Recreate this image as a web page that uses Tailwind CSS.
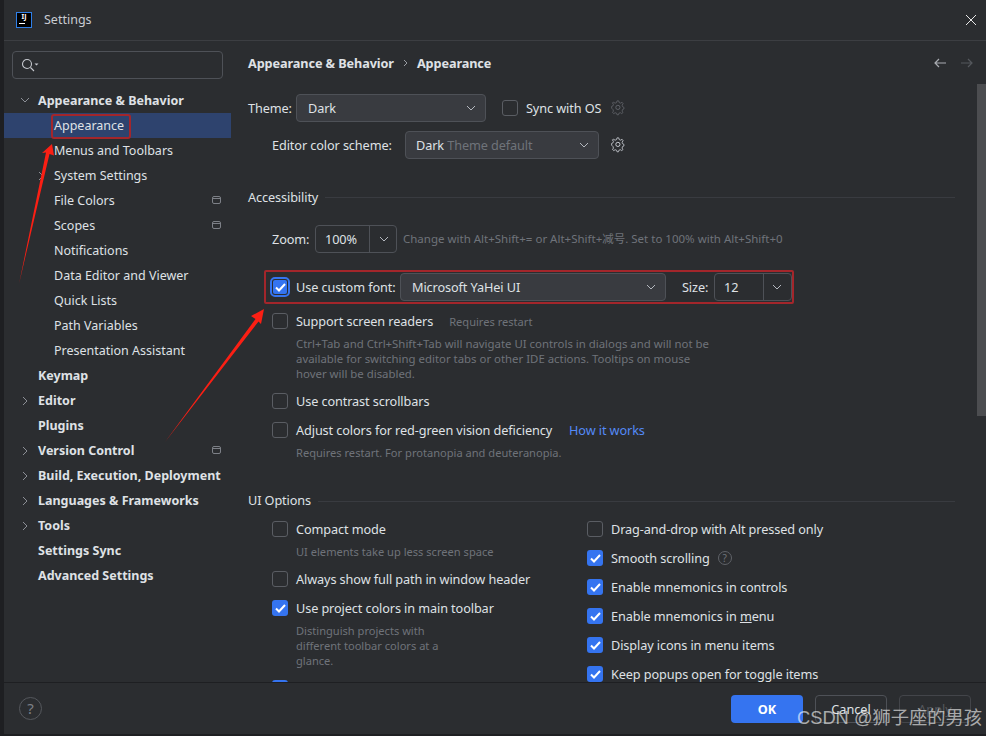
<!DOCTYPE html>
<html>
<head>
<meta charset="utf-8">
<script src="https://cdn.jsdelivr.net/npm/@tailwindcss/browser@4"></script>
</head>
<body class="m-0 bg-[#1e1f22]">
<div class="relative w-[986px] h-[736px] overflow-hidden flex bg-[#1e1f22] text-[12.5px] leading-5 text-[#dfe1e5] font-['Noto_Sans','Noto_Sans_CJK_SC',sans-serif]">
  <div class="w-[4px] shrink-0 bg-[#1e1f22]"></div>
  <div class="w-[982px] h-[734px] flex flex-col bg-[#2b2d30]">
    <div class="h-[41px] shrink-0 flex items-center border-b border-[#3c3e42] pb-[1px]">
      <div class="ml-[12px] w-[16px] h-[16px] border border-[#2f7fe8] bg-black relative flex flex-col items-center">
        <span class="text-[7px] leading-[8px] font-bold text-white">IJ</span>
        <span class="w-[6px] h-[1px] bg-white mt-[2px] self-start ml-[2px]"></span>
      </div>
      <span class="ml-[12px] text-[#c9ccd2]">Settings</span>
      <svg class="ml-auto mr-[9px]" width="12" height="12" viewBox="0 0 12 12"><path d="M1 1L11 11M11 1L1 11" stroke="#e8e8e8" stroke-width="1"/></svg>
    </div>
    <div class="h-[642px] shrink-0 flex overflow-hidden border-b border-[#1e1f22]">
      <div class="w-[227px] shrink-0">
        <div class="mt-[10px] ml-[8px] w-[211px] h-[28px] border border-[#4e5157] rounded-[4px] flex items-center pl-[8px]">
          <svg width="18" height="14" viewBox="0 0 18 14" fill="none"><circle cx="6" cy="6" r="4.5" stroke="#c5c8ce" stroke-width="1.1"/><path d="M9.5 9.5L13 13" stroke="#c5c8ce" stroke-width="1.1"/><path d="M13.5 5.5h4l-2 2z" fill="#c5c8ce"/></svg>
        </div>
        <div class="mt-[9px] text-[#dfe1e5]">
          <div class="h-[25px] flex items-center pl-[34px] relative font-bold"><svg class="absolute left-[16px] top-[9px]" width="10" height="7" viewBox="0 0 10 7" fill="none"><path d="M1 1l4 4 4-4" stroke="#8c8f96"/></svg>Appearance &amp; Behavior</div>
          <div class="h-[25px] flex items-center pl-[50px] bg-[#2e436e]">Appearance</div>
          <div class="h-[25px] flex items-center pl-[50px]">Menus and Toolbars</div>
          <div class="h-[25px] flex items-center pl-[50px] relative"><svg class="absolute left-[34px] top-[8px]" width="7" height="10" viewBox="0 0 7 10" fill="none"><path d="M1 1l4 4-4 4" stroke="#8c8f96"/></svg>System Settings</div>
          <div class="h-[25px] flex items-center justify-between pl-[50px] pr-[9px]">File Colors<svg width="10" height="9" viewBox="0 0 10 9" fill="none"><rect x="0.5" y="0.5" width="8" height="7" rx="1.5" stroke="#7d8087"/><path d="M1 2.5h7" stroke="#7d8087"/></svg></div>
          <div class="h-[25px] flex items-center justify-between pl-[50px] pr-[9px]">Scopes<svg width="10" height="9" viewBox="0 0 10 9" fill="none"><rect x="0.5" y="0.5" width="8" height="7" rx="1.5" stroke="#7d8087"/><path d="M1 2.5h7" stroke="#7d8087"/></svg></div>
          <div class="h-[25px] flex items-center pl-[50px]">Notifications</div>
          <div class="h-[25px] flex items-center pl-[50px]">Data Editor and Viewer</div>
          <div class="h-[25px] flex items-center pl-[50px]">Quick Lists</div>
          <div class="h-[25px] flex items-center pl-[50px]">Path Variables</div>
          <div class="h-[25px] flex items-center pl-[50px]">Presentation Assistant</div>
          <div class="h-[25px] flex items-center pl-[34px] font-bold">Keymap</div>
          <div class="h-[25px] flex items-center pl-[34px] relative font-bold"><svg class="absolute left-[18px] top-[8px]" width="7" height="10" viewBox="0 0 7 10" fill="none"><path d="M1 1l4 4-4 4" stroke="#8c8f96"/></svg>Editor</div>
          <div class="h-[25px] flex items-center pl-[34px] font-bold">Plugins</div>
          <div class="h-[25px] flex items-center justify-between pl-[34px] pr-[9px] relative font-bold"><svg class="absolute left-[18px] top-[8px]" width="7" height="10" viewBox="0 0 7 10" fill="none"><path d="M1 1l4 4-4 4" stroke="#8c8f96"/></svg>Version Control<svg width="10" height="9" viewBox="0 0 10 9" fill="none"><rect x="0.5" y="0.5" width="8" height="7" rx="1.5" stroke="#7d8087"/><path d="M1 2.5h7" stroke="#7d8087"/></svg></div>
          <div class="h-[25px] flex items-center pl-[34px] relative font-bold"><svg class="absolute left-[18px] top-[8px]" width="7" height="10" viewBox="0 0 7 10" fill="none"><path d="M1 1l4 4-4 4" stroke="#8c8f96"/></svg>Build, Execution, Deployment</div>
          <div class="h-[25px] flex items-center pl-[34px] relative font-bold"><svg class="absolute left-[18px] top-[8px]" width="7" height="10" viewBox="0 0 7 10" fill="none"><path d="M1 1l4 4-4 4" stroke="#8c8f96"/></svg>Languages &amp; Frameworks</div>
          <div class="h-[25px] flex items-center pl-[34px] relative font-bold"><svg class="absolute left-[18px] top-[8px]" width="7" height="10" viewBox="0 0 7 10" fill="none"><path d="M1 1l4 4-4 4" stroke="#8c8f96"/></svg>Tools</div>
          <div class="h-[25px] flex items-center pl-[34px] font-bold">Settings Sync</div>
          <div class="h-[25px] flex items-center pl-[34px] font-bold">Advanced Settings</div>
        </div>
      </div>
      <div class="flex-1 relative overflow-hidden pl-[17px] text-[12.7px] tracking-[-0.1px]">
        <div class="mt-[12px] h-[20px] flex items-center font-bold w-[707px]">
          <span>Appearance &amp; Behavior</span>
          <svg class="ml-[9px] mr-[9px]" width="5" height="8" viewBox="0 0 5 8" fill="none"><path d="M1 1l3 3-3 3" stroke="#9a9da3"/></svg>
          <span>Appearance</span>
          <svg class="ml-auto" width="14" height="10" viewBox="0 0 14 10" fill="none"><path d="M13 5H2M6 1L2 5l4 4" stroke="#a9acb2" stroke-width="1.2"/></svg>
          <svg class="ml-[13px] mr-[-19px] shrink-0" width="14" height="10" viewBox="0 0 14 10" fill="none"><path d="M1 5h11M8 1l4 4-4 4" stroke="#55585d" stroke-width="1.2"/></svg>
        </div>
        <div class="mt-[21px] h-[28px] flex items-center">
          <span class="w-[48px]">Theme:</span>
          <div class="w-[190px] h-[28px] rounded-[4px] border border-[#4e5157] bg-[#393b40] flex items-center justify-between pl-[11px] pr-[9px]">Dark<svg width="10" height="6" viewBox="0 0 10 6" fill="none"><path d="M1 1l4 4 4-4" stroke="#b4b8bf"/></svg></div>
          <span class="ml-[16px] w-[16px] h-[16px] rounded-[3px] border border-[#5a5d63]"></span>
          <span class="ml-[8px] w-[74px] whitespace-nowrap">Sync with OS</span>
          <svg class="ml-[11px]" width="16" height="16" viewBox="0 0 16 16" fill="none"><path d="M7 1h2l.5 2 1.6.7 1.8-1 1.2 1.6-1.2 1.7.4 1.7 1.7.8v2l-1.7.7-.4 1.7 1 1.7-1.4 1.2-1.6-1-1.7.6-.5 1.8H7l-.5-1.8-1.7-.6-1.6 1-1.4-1.2 1-1.7-.4-1.7L.7 9.500v-2l1.7-.8.4-1.7-1.2-1.7L3 2.7l1.8 1 1.7-.7z" transform="scale(.86)" stroke="#5f6268"/><circle cx="6.900" cy="7.400" r="2.100" stroke="#5f6268"/></svg>
        </div>
        <div class="mt-[9px] h-[28px] pl-[24px] flex items-center">
          <span class="w-[133px]">Editor color scheme:</span>
          <div class="w-[194px] h-[28px] rounded-[4px] border border-[#4e5157] bg-[#393b40] flex items-center justify-between pl-[10px] pr-[9px]"><span>Dark <span class="text-[#6f737a]">Theme default</span></span><svg width="10" height="6" viewBox="0 0 10 6" fill="none"><path d="M1 1l4 4 4-4" stroke="#b4b8bf"/></svg></div>
          <svg class="ml-[12px]" width="16" height="16" viewBox="0 0 16 16" fill="none"><path d="M7 1h2l.5 2 1.6.7 1.8-1 1.2 1.6-1.2 1.7.4 1.7 1.7.8v2l-1.7.7-.4 1.7 1 1.7-1.4 1.2-1.6-1-1.7.6-.5 1.8H7l-.5-1.8-1.7-.6-1.6 1-1.4-1.2 1-1.7-.4-1.7L.7 9.500v-2l1.7-.8.4-1.7-1.2-1.7L3 2.7l1.8 1 1.7-.7z" transform="scale(.86)" stroke="#c5c8ce"/><circle cx="6.900" cy="7.400" r="2.100" stroke="#c5c8ce"/></svg>
        </div>
        <div class="mt-[28px] h-[20px] pb-[1px] flex items-center w-[707px]"><span>Accessibility</span><span class="ml-[7px] flex-1 h-px mt-[2px] bg-[#393b40]"></span></div>
        <div class="mt-[18px] h-[28px] pl-[24px] flex items-center">
          <span class="w-[43px]">Zoom:</span>
          <div class="w-[82px] h-[28px] rounded-[4px] border border-[#4e5157] flex items-center">
            <span class="w-[54px] pl-[9px] border-r border-[#4e5157] h-full flex items-center">100%</span>
            <svg class="ml-[9px]" width="10" height="6" viewBox="0 0 10 6" fill="none"><path d="M1 1l4 4 4-4" stroke="#b4b8bf"/></svg>
          </div>
          <span class="ml-[6px] text-[11.5px] tracking-normal text-[#6f737a]">Change with Alt+Shift+= or Alt+Shift+减号. Set to 100% with Alt+Shift+0</span>
        </div>
        <div class="mt-[20px] h-[28px] pl-[22px] flex items-center">
          <span class="w-[20px] h-[20px] rounded-[5px] border-2 border-[#3574f0] p-[1px] flex"><span class="w-full h-full rounded-[2px] bg-[#3574f0] flex items-center justify-center"><svg width="11" height="9" viewBox="0 0 11 9" fill="none"><path d="M1 4.500l3 3 6-6.500" stroke="#fff" stroke-width="2"/></svg></span></span>
          <span class="ml-[6px] w-[104px]">Use custom font:</span>
          <div class="w-[266px] h-[28px] rounded-[4px] border border-[#4e5157] bg-[#393b40] flex items-center justify-between pl-[11px] pr-[9px]">Microsoft YaHei UI<svg width="10" height="6" viewBox="0 0 10 6" fill="none"><path d="M1 1l4 4 4-4" stroke="#b4b8bf"/></svg></div>
          <span class="ml-[16px] w-[32px]">Size:</span>
          <div class="w-[78px] h-[28px] rounded-[4px] border border-[#4e5157] flex items-center">
            <span class="w-[49px] pl-[9px] border-r border-[#4e5157] h-full flex items-center">12</span>
            <svg class="ml-[8px]" width="10" height="6" viewBox="0 0 10 6" fill="none"><path d="M1 1l4 4 4-4" stroke="#b4b8bf"/></svg>
          </div>
        </div>
        <div class="mt-[10px] h-[20px] pl-[24px] flex items-center">
          <span class="w-[16px] h-[16px] rounded-[3px] border border-[#5a5d63]"></span>
          <span class="ml-[8px]">Support screen readers</span>
          <span class="ml-[16px] pt-[2px] text-[11.1px] tracking-normal text-[#6f737a]">Requires restart</span>
        </div>
        <div class="mt-[5px] pl-[48px] text-[11.4px] tracking-normal leading-[15px] text-[#6f737a] whitespace-nowrap">Ctrl+Tab and Ctrl+Shift+Tab will navigate UI controls in dialogs and will not be<br>available for switching editor tabs or other IDE actions. Tooltips on mouse<br>hover will be disabled.</div>
        <div class="mt-[10px] h-[20px] pl-[24px] flex items-center">
          <span class="w-[16px] h-[16px] rounded-[3px] border border-[#5a5d63]"></span>
          <span class="ml-[8px]">Use contrast scrollbars</span>
        </div>
        <div class="mt-[9px] h-[20px] pl-[24px] flex items-center">
          <span class="w-[16px] h-[16px] rounded-[3px] border border-[#5a5d63]"></span>
          <span class="ml-[8px]">Adjust colors for red-green vision deficiency</span>
          <span class="ml-[17px] text-[#548af7]">How it works</span>
        </div>
        <div class="mt-[5px] pl-[48px] text-[11.1px] tracking-normal leading-[15px] text-[#6f737a]">Requires restart. For protanopia and deuteranopia.</div>
        <div class="mt-[30px] h-[20px] flex items-center w-[707px]"><span>UI Options</span><span class="ml-[7px] flex-1 h-px mt-[3px] bg-[#393b40]"></span></div>
        <div class="mt-[9px] flex">
          <div class="w-[339px] pl-[24px] shrink-0">
            <div class="h-[20px] flex items-center"><span class="w-[16px] h-[16px] rounded-[3px] border border-[#5a5d63]"></span><span class="ml-[8px]">Compact mode</span></div>
            <div class="mt-[5px] pl-[24px] text-[11.1px] tracking-normal leading-[15px] text-[#6f737a]">UI elements take up less screen space</div>
            <div class="mt-[10px] h-[20px] flex items-center"><span class="w-[16px] h-[16px] rounded-[3px] border border-[#5a5d63]"></span><span class="ml-[8px]">Always show full path in window header</span></div>
            <div class="mt-[9px] h-[20px] flex items-center"><span class="w-[16px] h-[16px] rounded-[3px] bg-[#3574f0] flex items-center justify-center"><svg width="11" height="9" viewBox="0 0 11 9" fill="none"><path d="M1 4.500l3 3 6-6.500" stroke="#fff" stroke-width="2"/></svg></span><span class="ml-[8px]">Use project colors in main toolbar</span></div>
            <div class="mt-[5px] pl-[24px] text-[11.1px] tracking-normal leading-[15px] text-[#6f737a]">Distinguish projects with<br>different toolbar colors at a<br>glance.</div>
            <div class="mt-[10px] h-[20px] flex items-center"><span class="w-[16px] h-[16px] rounded-[3px] bg-[#3574f0]"></span></div>
          </div>
          <div class="flex flex-col gap-[9px]">
            <div class="h-[20px] flex items-center"><span class="w-[16px] h-[16px] rounded-[3px] border border-[#5a5d63]"></span><span class="ml-[8px]">Drag-and-drop with Alt pressed only</span></div>
            <div class="h-[20px] flex items-center"><span class="w-[16px] h-[16px] rounded-[3px] bg-[#3574f0] flex items-center justify-center"><svg width="11" height="9" viewBox="0 0 11 9" fill="none"><path d="M1 4.500l3 3 6-6.500" stroke="#fff" stroke-width="2"/></svg></span><span class="ml-[8px]">Smooth scrolling</span><span class="ml-[8px] w-[14px] h-[14px] rounded-full border border-[#5f6268] text-[#6f737a] text-[10px] leading-[12px] text-center">?</span></div>
            <div class="h-[20px] flex items-center"><span class="w-[16px] h-[16px] rounded-[3px] bg-[#3574f0] flex items-center justify-center"><svg width="11" height="9" viewBox="0 0 11 9" fill="none"><path d="M1 4.500l3 3 6-6.500" stroke="#fff" stroke-width="2"/></svg></span><span class="ml-[8px]">Enable mnemonics in controls</span></div>
            <div class="h-[20px] flex items-center"><span class="w-[16px] h-[16px] rounded-[3px] bg-[#3574f0] flex items-center justify-center"><svg width="11" height="9" viewBox="0 0 11 9" fill="none"><path d="M1 4.500l3 3 6-6.500" stroke="#fff" stroke-width="2"/></svg></span><span class="ml-[8px]">Enable mnemonics in <span class="underline">m</span>enu</span></div>
            <div class="h-[20px] flex items-center"><span class="w-[16px] h-[16px] rounded-[3px] bg-[#3574f0] flex items-center justify-center"><svg width="11" height="9" viewBox="0 0 11 9" fill="none"><path d="M1 4.500l3 3 6-6.500" stroke="#fff" stroke-width="2"/></svg></span><span class="ml-[8px]">Display icons in menu items</span></div>
            <div class="h-[20px] flex items-center"><span class="w-[16px] h-[16px] rounded-[3px] bg-[#3574f0] flex items-center justify-center"><svg width="11" height="9" viewBox="0 0 11 9" fill="none"><path d="M1 4.500l3 3 6-6.500" stroke="#fff" stroke-width="2"/></svg></span><span class="ml-[8px]">Keep popups open for toggle items</span></div>
          </div>
        </div>
        <div class="absolute right-0 top-[43px] w-[9px] h-[332px] bg-[#4c4d50]"></div>
      </div>
    </div>
    <div class="flex-1 flex items-center pl-[15px] pr-[15px]">
      <span class="w-[23px] h-[23px] rounded-full border border-[#55585d] text-[#7d8087] text-[15px] leading-[21px] text-center">?</span>
      <div class="ml-auto flex gap-[12px] text-[12.7px]">
        <span class="w-[72px] h-[28px] rounded-[4px] bg-[#3574f0] text-white font-bold flex items-center justify-center">OK</span>
        <span class="w-[72px] h-[28px] rounded-[4px] border border-[#4e5157] flex items-center justify-center">Cancel</span>
        <span class="w-[72px] h-[28px] rounded-[4px] border border-[#43454a] text-[#55585d] flex items-center justify-center">Apply</span>
      </div>
    </div>
  </div>

  <div class="absolute left-[51px] top-[114px] w-[80px] h-[25px] border-2 border-[#a3262b] rounded-[3px]"></div>
  <div class="absolute left-[264px] top-[270px] w-[530px] h-[34px] border-2 border-[#a3262b] rounded-[2px]"></div>
  <svg class="absolute left-0 top-0 pointer-events-none" width="986" height="736" viewBox="0 0 986 736">
    <polygon points="52,144 42,153 46,152.500 19,284 49.500,154 54,155.500" fill="#fb1f14"/>
    <polygon points="264,309 251,316 255.500,319 165,442 258.500,321.500 261,324" fill="#fb1f14"/>
  </svg>
  <div class="absolute left-[797px] top-[705px] text-[18.300px] leading-[26px] whitespace-nowrap text-white/60 font-['Liberation_Sans','Noto_Sans_CJK_SC',sans-serif]">CSDN @狮子座的男孩</div>
</div>
</body>
</html>
